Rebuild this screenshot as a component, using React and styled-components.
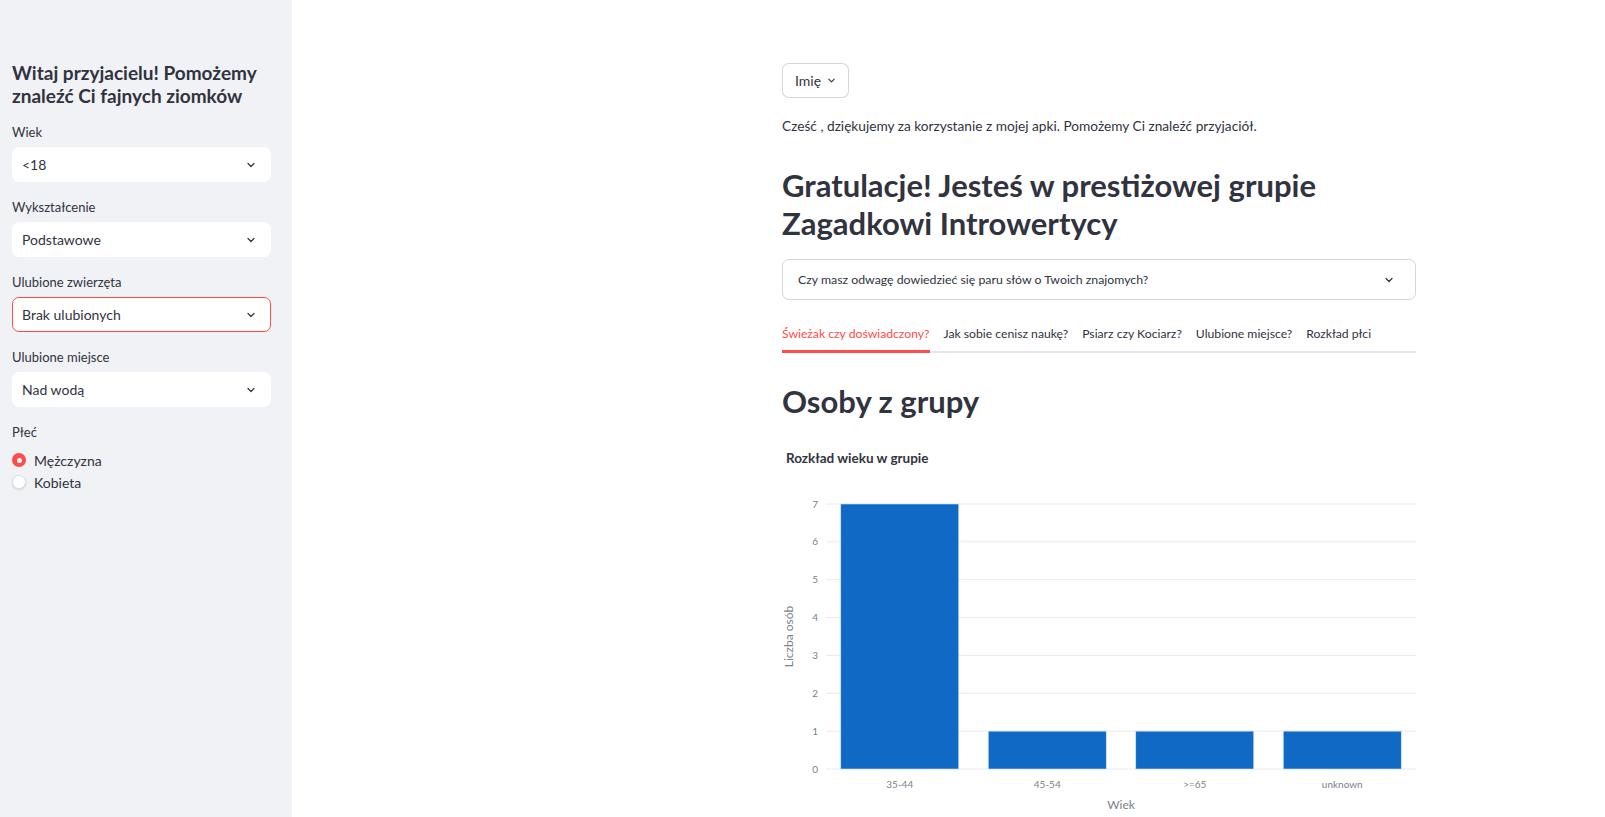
import React from 'react';
import styled, { createGlobalStyle } from 'styled-components';

const GlobalStyle = createGlobalStyle`
  html, body {
    margin: 0;
    padding: 0;
    overflow: hidden;
  }
  body {
    font-family: Lato, "Noto Sans", sans-serif;
    color: #31333f;
    background: #fff;
  }
`;

const Page = styled.div`
  display: flex;
  height: 100vh;
  overflow: hidden;
`;

const Sidebar = styled.aside`
  flex: 0 0 292px;
  box-sizing: border-box;
  padding: 62px 21px 0 12px;
  background: #f0f2f6;
`;

const SideTitle = styled.h2`
  margin: 0 0 15px;
  font-size: 19px;
  line-height: 22.5px;
  font-weight: 700;
  color: #31333f;
`;

const Field = styled.div`
  display: flex;
  flex-direction: column;
  gap: 5px;
  margin-bottom: 15px;
`;

const Label = styled.div`
  font-size: 13px;
  line-height: 20px;
  color: #31333f;
`;

const Select = styled.div`
  display: flex;
  align-items: center;
  justify-content: space-between;
  height: 35px;
  box-sizing: border-box;
  padding: 0 13px 0 9px;
  background: #fff;
  border: 1px solid ${p => (p.$focused ? '#ff4b4b' : '#fff')};
  border-radius: 7px;
  font-size: 14px;
  color: #31333f;
`;

const RadioGroup = styled.div`
  display: flex;
  flex-direction: column;
  margin-top: 7px;
`;

const RadioRow = styled.label`
  display: flex;
  align-items: center;
  gap: 8px;
  height: 22px;
  font-size: 14px;
`;

const RadioDot = styled.span`
  box-sizing: border-box;
  width: 14px;
  height: 14px;
  border-radius: 50%;
  background: ${p => (p.$checked ? '#ff4b4b' : '#fff')};
  border: ${p => (p.$checked ? 'none' : '1px solid #dcdde2')};
  box-shadow: ${p => (p.$checked ? 'none' : '0 1px 2px rgba(0,0,0,0.12)')};
  display: flex;
  align-items: center;
  justify-content: center;

  &::after {
    content: '';
    display: ${p => (p.$checked ? 'block' : 'none')};
    width: 5px;
    height: 5px;
    border-radius: 50%;
    background: #fff;
  }
`;

const Main = styled.main`
  flex: 1;
  padding: 63px 0 0 490px;
`;

const Column = styled.div`
  width: 634px;
`;

const NameButton = styled.button`
  display: inline-flex;
  align-items: center;
  gap: 5px;
  height: 35px;
  padding: 0 11px 0 12px;
  background: #fff;
  border: 1px solid rgba(49, 51, 63, 0.2);
  border-radius: 7px;
  font: inherit;
  font-size: 14px;
  color: #31333f;
`;

const Intro = styled.p`
  margin: 17px 0 0;
  font-size: 13.7px;
  line-height: 21px;
`;

const Heading = styled.h1`
  margin: 30px 0 0;
  font-size: 31px;
  line-height: 38px;
  font-weight: 700;
  color: #31333f;
`;

const Expander = styled.div`
  display: flex;
  align-items: center;
  justify-content: space-between;
  height: 41px;
  box-sizing: border-box;
  margin-top: 17px;
  padding: 0 20px 0 15px;
  border: 1px solid rgba(49, 51, 63, 0.2);
  border-radius: 7px;
  font-size: 12.3px;
`;

const TabList = styled.div`
  display: flex;
  gap: 14px;
  margin-top: 16px;
  border-bottom: 2px solid #e6e7ea;
`;

const Tab = styled.div`
  padding: 8px 0 6px;
  margin-bottom: -2px;
  font-size: 12.2px;
  line-height: 20px;
  color: ${p => (p.$active ? '#ff4b4b' : '#31333f')};
  border-bottom: 3px solid ${p => (p.$active ? '#ff4b4b' : 'transparent')};
`;

const SubHeading = styled.h2`
  margin: 29px 0 0;
  font-size: 31px;
  line-height: 38px;
  font-weight: 700;
`;

const ChartTitle = styled.div`
  margin: 28px 0 0 4px;
  font-size: 13.5px;
  line-height: 20px;
  font-weight: 700;
`;

const ChartWrap = styled.div`
  margin-top: 12px;
`;

const Chevron = ({ size = 12, stroke = 2.4 }) => (
  <svg width={size} height={size} viewBox="0 0 24 24" fill="none" stroke="#31333f"
    strokeWidth={stroke} strokeLinecap="round" strokeLinejoin="round">
    <path d="M6 9l6 6 6-6" />
  </svg>
);

const fields = [
  { label: 'Wiek', value: '<18' },
  { label: 'Wykształcenie', value: 'Podstawowe' },
  { label: 'Ulubione zwierzęta', value: 'Brak ulubionych', focused: true },
  { label: 'Ulubione miejsce', value: 'Nad wodą' },
];

const tabs = [
  'Świeżak czy doświadczony?',
  'Jak sobie cenisz naukę?',
  'Psiarz czy Kociarz?',
  'Ulubione miejsce?',
  'Rozkład płci',
];

const data = [
  { name: '35-44', value: 7 },
  { name: '45-54', value: 1 },
  { name: '>=65', value: 1 },
  { name: 'unknown', value: 1 },
];

const BarChart = () => {
  const left = 44;
  const right = 634;
  const top = 24;
  const bottom = 289;
  const unit = (bottom - top) / 7;
  const step = (right - left) / data.length;
  const tick = { fontSize: 10, fill: '#7b7f8c', fontFamily: 'Lato, sans-serif' };
  return (
    <svg width="634" height="345" viewBox="0 0 634 345">
      {[0, 1, 2, 3, 4, 5, 6, 7].map(v => (
        <g key={v}>
          <line x1={left} x2={right} y1={bottom - v * unit} y2={bottom - v * unit}
            stroke="#e8eaf0" strokeWidth="1" />
          <text x={36} y={bottom - v * unit + 3.5} textAnchor="end" {...tick}>{v}</text>
        </g>
      ))}
      {data.map((d, i) => {
        const x = left + i * step + step * 0.1;
        const h = d.value * unit;
        return (
          <g key={d.name}>
            <rect x={x} y={bottom - h} width={step * 0.8} height={h}
              fill="#0f69c5" stroke="#d4e3f5" strokeWidth="0.6" />
            <text x={left + i * step + step / 2} y={308} textAnchor="middle" {...tick}>{d.name}</text>
          </g>
        );
      })}
      <text x={(left + right) / 2} y={329} textAnchor="middle"
        style={{ fontSize: 12, fill: '#7b7f8c', fontFamily: 'Lato, sans-serif' }}>Wiek</text>
      <text transform={`translate(11 ${(top + bottom) / 2}) rotate(-90)`} textAnchor="middle"
        style={{ fontSize: 12, fill: '#7b7f8c', fontFamily: 'Lato, sans-serif' }}>Liczba osób</text>
    </svg>
  );
};

export default function App() {
  return (
    <>
      <GlobalStyle />
      <Page>
        <Sidebar>
          <SideTitle>Witaj przyjacielu! Pomożemy znaleźć Ci fajnych ziomków</SideTitle>
          {fields.map(f => (
            <Field key={f.label}>
              <Label>{f.label}</Label>
              <Select $focused={f.focused}>
                <span>{f.value}</span>
                <Chevron />
              </Select>
            </Field>
          ))}
          <Label>Płeć</Label>
          <RadioGroup>
            <RadioRow><RadioDot $checked />Mężczyzna</RadioRow>
            <RadioRow><RadioDot />Kobieta</RadioRow>
          </RadioGroup>
        </Sidebar>
        <Main>
          <Column>
            <NameButton>Imię <Chevron size={11} /></NameButton>
            <Intro>Cześć , dziękujemy za korzystanie z mojej apki. Pomożemy Ci znaleźć przyjaciół.</Intro>
            <Heading>Gratulacje! Jesteś w prestiżowej grupie Zagadkowi Introwertycy</Heading>
            <Expander>
              <span>Czy masz odwagę dowiedzieć się paru słów o Twoich znajomych?</span>
              <Chevron />
            </Expander>
            <TabList>
              {tabs.map((t, i) => (
                <Tab key={t} $active={i === 0}>{t}</Tab>
              ))}
            </TabList>
            <SubHeading>Osoby z grupy</SubHeading>
            <ChartTitle>Rozkład wieku w grupie</ChartTitle>
            <ChartWrap>
              <BarChart />
            </ChartWrap>
          </Column>
        </Main>
      </Page>
    </>
  );
}
